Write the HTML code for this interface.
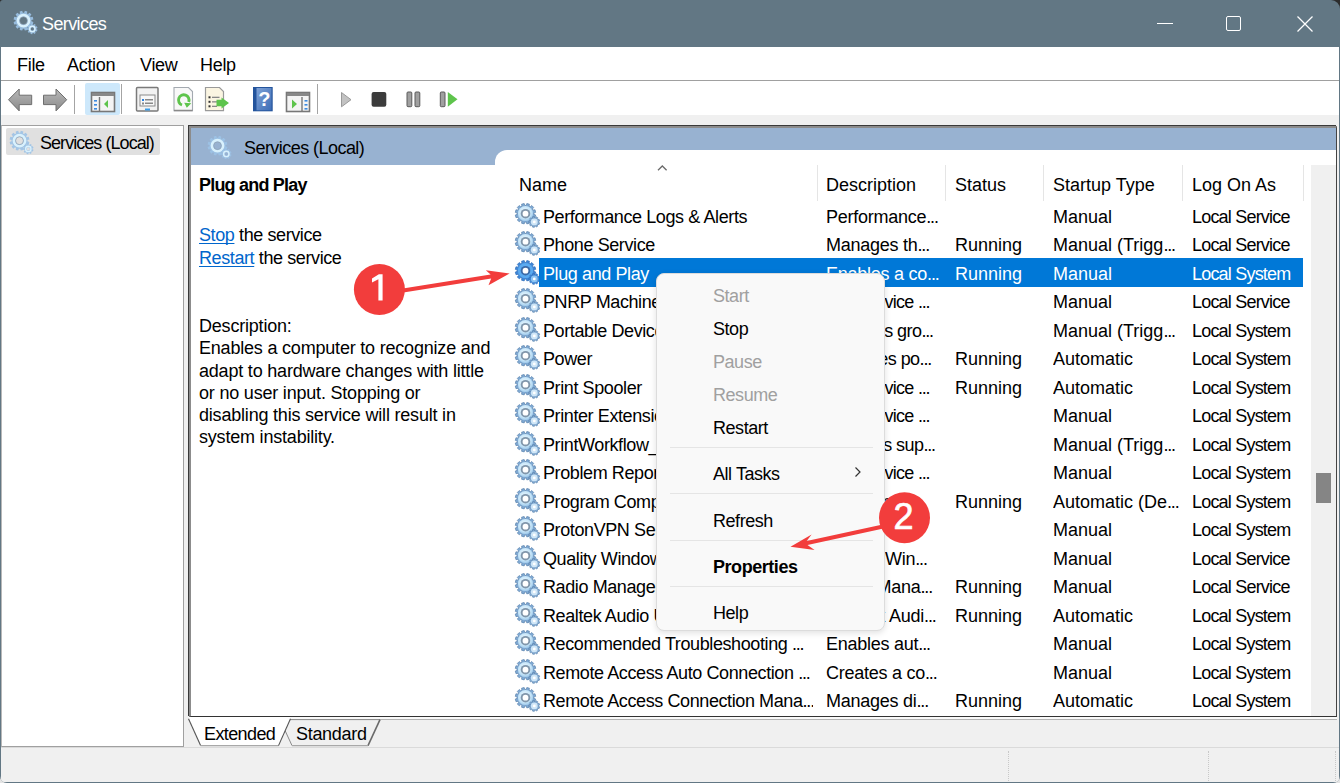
<!DOCTYPE html>
<html><head><meta charset="utf-8">
<style>
*{margin:0;padding:0;box-sizing:border-box}
html,body{width:1340px;height:783px;overflow:hidden;background:linear-gradient(#2c2c2c 50%,#e4e4e4 50%)}
body{font-family:"Liberation Sans",sans-serif;font-size:18px;color:#000;position:relative}
.a{position:absolute}
.t{position:absolute;white-space:nowrap;line-height:20px}
#win{position:absolute;left:0;top:0;width:1340px;height:783px;background:#627784;border-radius:3px 9px 7px 7px;overflow:hidden}
#title{color:#fff}
#client{position:absolute;left:1px;top:47px;width:1338px;height:735px;background:#f0f0f0}
#menubar{position:absolute;left:0;top:0;width:1338px;height:34px;background:#fff;border-bottom:1px solid #a0a0a0;letter-spacing:-0.3px}
#toolbar{position:absolute;left:0;top:34px;width:1338px;height:34px;background:#fff}
.sep{position:absolute;top:40px;width:1px;height:28px;border-left:1px dotted #9a9a9a}
#lpane{position:absolute;left:0px;top:78px;width:183px;border-left:1px solid #b8b8b8;height:622px;background:#fff;border-top:1px solid #a0a0a0;border-right:1px solid #a0a0a0;border-bottom:1px solid #a0a0a0}
#rpane{position:absolute;left:188px;top:79px;width:1148px;height:591px;background:#fff;border-top:2px solid #8c8c8c;border-left:2px solid #8c8c8c;border-bottom:1px solid #333;border-right:1px solid #444;box-shadow:-1px -1px 0 #3a3a3a}
#hdr{position:absolute;left:0;top:0;width:1145px;height:37px;background:#98b2d1}
#list{position:absolute;left:304px;top:22px;width:841px;height:566px;background:#fff;border-top-left-radius:12px}
.row{position:absolute;left:-1px;width:820px;height:28.5px}
.c{position:absolute;top:0;white-space:nowrap;line-height:28px;overflow:hidden}
.sel{background:#0078d7;color:#fff}
.cm{position:absolute;color:#000}
.dis{color:#a0a0a0}
.el{letter-spacing:-1.2px}
.lnk{color:#0066cc;text-decoration:underline;text-underline-offset:2px;text-decoration-skip-ink:none}
.msep{position:absolute;left:13px;width:203px;height:1px;background:#e5e5e5}
</style></head><body>
<svg width="0" height="0" style="position:absolute">
<defs>
<radialGradient id="gg" cx="45%" cy="40%" r="60%">
<stop offset="0" stop-color="#f2fbff"/><stop offset="0.7" stop-color="#c4e4f8"/><stop offset="1" stop-color="#9cc6e8"/>
</radialGradient>
<symbol id="gear" viewBox="0 0 27 26">
<path d="M19.77 11.35 L21.71 12.04 L21.02 14.64 L18.99 14.27 L18.34 15.40 L19.67 16.97 L17.77 18.87 L16.20 17.54 L15.07 18.19 L15.44 20.22 L12.84 20.91 L12.15 18.97 L10.85 18.97 L10.16 20.91 L7.56 20.22 L7.93 18.19 L6.80 17.54 L5.23 18.87 L3.33 16.97 L4.66 15.40 L4.01 14.27 L1.98 14.64 L1.29 12.04 L3.23 11.35 L3.23 10.05 L1.29 9.36 L1.98 6.76 L4.01 7.13 L4.66 6.00 L3.33 4.43 L5.23 2.53 L6.80 3.86 L7.93 3.21 L7.56 1.18 L10.16 0.49 L10.85 2.43 L12.15 2.43 L12.84 0.49 L15.44 1.18 L15.07 3.21 L16.20 3.86 L17.77 2.53 L19.67 4.43 L18.34 6.00 L18.99 7.13 L21.02 6.76 L21.71 9.36 L19.77 10.05Z" fill="#7fa9d3" stroke="#5a83ad" stroke-width="0.7"/>
<circle cx="11.5" cy="10.7" r="7.6" fill="url(#gg)"/>
<circle cx="11.5" cy="10.7" r="4.8" fill="#8096ab"/>
<circle cx="11.5" cy="10.7" r="2.9" fill="#fff"/>
<path d="M24.48 19.34 L25.72 19.86 L25.06 21.65 L23.78 21.25 L23.22 21.92 L23.84 23.11 L22.18 24.07 L21.46 22.94 L20.59 23.09 L20.30 24.40 L18.42 24.07 L18.59 22.74 L17.83 22.30 L16.76 23.11 L15.54 21.65 L16.53 20.74 L16.22 19.92 L14.88 19.86 L14.88 17.94 L16.22 17.88 L16.53 17.06 L15.54 16.15 L16.76 14.69 L17.83 15.50 L18.59 15.06 L18.42 13.73 L20.30 13.40 L20.59 14.71 L21.46 14.86 L22.18 13.73 L23.84 14.69 L23.22 15.88 L23.78 16.55 L25.06 16.15 L25.72 17.94 L24.48 18.46Z" fill="#7fa9d3" stroke="#5a83ad" stroke-width="0.6"/>
<circle cx="20.3" cy="18.9" r="3.4" fill="#cfe6f7"/>
<circle cx="20.3" cy="18.9" r="1.4" fill="#fff"/>
</symbol>
<symbol id="gearS" viewBox="0 0 27 26">
<path d="M19.77 11.35 L21.71 12.04 L21.02 14.64 L18.99 14.27 L18.34 15.40 L19.67 16.97 L17.77 18.87 L16.20 17.54 L15.07 18.19 L15.44 20.22 L12.84 20.91 L12.15 18.97 L10.85 18.97 L10.16 20.91 L7.56 20.22 L7.93 18.19 L6.80 17.54 L5.23 18.87 L3.33 16.97 L4.66 15.40 L4.01 14.27 L1.98 14.64 L1.29 12.04 L3.23 11.35 L3.23 10.05 L1.29 9.36 L1.98 6.76 L4.01 7.13 L4.66 6.00 L3.33 4.43 L5.23 2.53 L6.80 3.86 L7.93 3.21 L7.56 1.18 L10.16 0.49 L10.85 2.43 L12.15 2.43 L12.84 0.49 L15.44 1.18 L15.07 3.21 L16.20 3.86 L17.77 2.53 L19.67 4.43 L18.34 6.00 L18.99 7.13 L21.02 6.76 L21.71 9.36 L19.77 10.05Z" fill="#3f86d6" stroke="#2f6fba" stroke-width="0.7"/>
<circle cx="11.5" cy="10.7" r="7.6" fill="#5aaaf0"/>
<circle cx="11.5" cy="10.7" r="4.8" fill="#3a6aa8"/>
<circle cx="11.5" cy="10.7" r="2.9" fill="#fff"/>
<path d="M24.48 19.34 L25.72 19.86 L25.06 21.65 L23.78 21.25 L23.22 21.92 L23.84 23.11 L22.18 24.07 L21.46 22.94 L20.59 23.09 L20.30 24.40 L18.42 24.07 L18.59 22.74 L17.83 22.30 L16.76 23.11 L15.54 21.65 L16.53 20.74 L16.22 19.92 L14.88 19.86 L14.88 17.94 L16.22 17.88 L16.53 17.06 L15.54 16.15 L16.76 14.69 L17.83 15.50 L18.59 15.06 L18.42 13.73 L20.30 13.40 L20.59 14.71 L21.46 14.86 L22.18 13.73 L23.84 14.69 L23.22 15.88 L23.78 16.55 L25.06 16.15 L25.72 17.94 L24.48 18.46Z" fill="#3f86d6" stroke="#2f6fba" stroke-width="0.6"/>
<circle cx="20.3" cy="18.9" r="3.4" fill="#8cc4f2"/>
<circle cx="20.3" cy="18.9" r="1.4" fill="#fff"/>
</symbol>
<symbol id="gearP" viewBox="0 0 27 26">
<path d="M19.48 11.33 L21.41 12.01 L20.74 14.53 L18.72 14.14 L18.09 15.23 L19.43 16.79 L17.59 18.63 L16.03 17.29 L14.94 17.92 L15.33 19.94 L12.81 20.61 L12.13 18.68 L10.87 18.68 L10.19 20.61 L7.67 19.94 L8.06 17.92 L6.97 17.29 L5.41 18.63 L3.57 16.79 L4.91 15.23 L4.28 14.14 L2.26 14.53 L1.59 12.01 L3.52 11.33 L3.52 10.07 L1.59 9.39 L2.26 6.87 L4.28 7.26 L4.91 6.17 L3.57 4.61 L5.41 2.77 L6.97 4.11 L8.06 3.48 L7.67 1.46 L10.19 0.79 L10.87 2.72 L12.13 2.72 L12.81 0.79 L15.33 1.46 L14.94 3.48 L16.03 4.11 L17.59 2.77 L19.43 4.61 L18.09 6.17 L18.72 7.26 L20.74 6.87 L21.41 9.39 L19.48 10.07Z M7.90 10.70 A3.6 3.6 0 1 0 15.10 10.70 A3.6 3.6 0 1 0 7.90 10.70Z" fill="#9cc2e6" fill-rule="evenodd" opacity="0.9"/>
<circle cx="11.5" cy="10.7" r="5.6" fill="none" stroke="#d9f1fd" stroke-width="2.6"/>
<circle cx="11.5" cy="10.7" r="3.9" fill="none" stroke="#8a97a3" stroke-width="0.8" opacity="0.7"/>
<path d="M24.38 19.33 L25.52 19.82 L24.89 21.55 L23.70 21.19 L23.15 21.85 L23.71 22.96 L22.11 23.88 L21.43 22.84 L20.59 22.99 L20.30 24.20 L18.49 23.88 L18.63 22.65 L17.89 22.22 L16.89 22.96 L15.71 21.55 L16.61 20.70 L16.32 19.89 L15.08 19.82 L15.08 17.98 L16.32 17.91 L16.61 17.10 L15.71 16.25 L16.89 14.84 L17.89 15.58 L18.63 15.15 L18.49 13.92 L20.30 13.60 L20.59 14.81 L21.43 14.96 L22.11 13.92 L23.71 14.84 L23.15 15.95 L23.70 16.61 L24.89 16.25 L25.52 17.98 L24.38 18.47Z M18.70 18.90 A1.6 1.6 0 1 0 21.90 18.90 A1.6 1.6 0 1 0 18.70 18.90Z" fill="#9cc2e6" fill-rule="evenodd" opacity="0.9"/>
<circle cx="20.3" cy="18.9" r="2.7" fill="none" stroke="#d9f1fd" stroke-width="1.4"/>
</symbol>
</defs>
</svg>

<div id="win">
  <!-- title bar -->
  <svg class="a" style="left:12px;top:10px" width="27" height="26"><use href="#gearP"/></svg>
  <div class="t" id="title" style="left:42px;top:14px;letter-spacing:-0.6px">Services</div>
  <div class="a" style="left:1157px;top:23px;width:16px;height:1px;background:#fff"></div>
  <div class="a" style="left:1226px;top:16px;width:15px;height:15px;border:1.5px solid #fff;border-radius:2px"></div>
  <svg class="a" style="left:1296px;top:15px" width="18" height="18"><path d="M1.5 1.5L16.5 16.5M16.5 1.5L1.5 16.5" stroke="#fff" stroke-width="1.3"/></svg>

<svg class="a" style="left:0;top:81px;z-index:5" width="470" height="35">
<defs>
<linearGradient id="ag" x1="0" y1="0" x2="0" y2="1"><stop offset="0" stop-color="#b8b8b8"/><stop offset="1" stop-color="#8a8a8a"/></linearGradient>
</defs>
<!-- back -->
<path d="M8.5 18.7 L19.2 8 L19.2 14.2 L31.7 14.2 L31.7 23.6 L19.2 23.6 L19.2 29.9 Z" fill="url(#ag)" stroke="#6e6e6e" stroke-width="1"/>
<!-- forward -->
<path d="M66.7 18.7 L56 8 L56 14.2 L43.5 14.2 L43.5 23.6 L56 23.6 L56 29.9 Z" fill="url(#ag)" stroke="#6e6e6e" stroke-width="1"/>
<line x1="74.5" y1="4" x2="74.5" y2="33" stroke="#a4a4a4"/>
<!-- selected show tree -->
<rect x="85" y="2" width="35" height="32" rx="2" fill="#cde8fb"/>
<rect x="91.5" y="11.5" width="23" height="19" fill="#f4f4f4" stroke="#777" stroke-width="1.6"/>
<rect x="92" y="12" width="22" height="3" fill="#888"/>
<line x1="99.5" y1="16" x2="99.5" y2="30" stroke="#777" stroke-width="1.4"/>
<rect x="94" y="19" width="3" height="1.6" fill="#3c8ae0"/><rect x="94" y="23" width="3" height="1.6" fill="#3c8ae0"/><rect x="94" y="27" width="3" height="1.6" fill="#3c8ae0"/>
<path d="M104 23 L108 19 L108 27 Z" fill="#5ec44c"/>
<line x1="121.5" y1="3" x2="121.5" y2="33" stroke="#a4a4a4"/>
<!-- properties -->
<rect x="136.5" y="6.5" width="21.5" height="23.5" rx="1" fill="#f2f2f2" stroke="#7a7a7a" stroke-width="1.5"/>
<rect x="140" y="14" width="15" height="11" fill="#f8f8f8" stroke="#8a8a8a" stroke-width="1"/>
<rect x="142" y="18" width="2" height="2" fill="#2a80e0"/><rect x="145" y="18" width="8" height="1.5" fill="#888"/>
<rect x="142" y="21.5" width="2" height="2" fill="#888"/><rect x="145" y="21.5" width="8" height="1.5" fill="#888"/>
<rect x="145" y="27.5" width="5" height="2" fill="#3d9de8"/>
<!-- refresh doc -->
<path d="M174 6.5 H188.5 L192.5 10.5 V29.7 H174 Z" fill="#f8f8f8" stroke="#a3a9b0" stroke-width="1.1"/>
<path d="M174 29.5 H192.5" stroke="#8a8a8a" stroke-width="1.4"/>
<path d="M182 24 A5.25 5.25 0 1 1 188.7 20.9" fill="none" stroke="#5ec44c" stroke-width="2.9"/>
<path d="M184.2 21.8 L191.3 22.3 L186.8 26.8 Z" fill="#5ec44c"/>
<!-- export doc -->
<path d="M205.5 6.5 H219.5 L223.5 10.5 V29.7 H205.5 Z" fill="#fbf5e2" stroke="#9a9a9a" stroke-width="1.2"/>
<rect x="208.5" y="15.3" width="2" height="2" fill="#333"/><rect x="212" y="15.7" width="7.5" height="1.3" fill="#888"/>
<rect x="208.5" y="19.8" width="2" height="2" fill="#333"/><rect x="212" y="20.2" width="7.5" height="1.3" fill="#888"/>
<rect x="208.5" y="24.3" width="2" height="2" fill="#333"/><rect x="212" y="24.7" width="5" height="1.3" fill="#888"/>
<path d="M216.5 18.8 H221.5 V16.5 L229 22 L221.5 27.5 V25.2 H216.5 Z" fill="#5ec44c"/>
<!-- help book -->
<linearGradient id="bk" x1="0" y1="0" x2="1" y2="1"><stop offset="0" stop-color="#7fa2d6"/><stop offset="1" stop-color="#3d6db6"/></linearGradient>
<rect x="253" y="6" width="19.7" height="24.3" fill="#24549c"/>
<rect x="256.5" y="7" width="15" height="22.3" fill="url(#bk)"/>
<text x="264.3" y="25" font-family="Liberation Sans" font-weight="bold" font-size="20" fill="#fff" text-anchor="middle">?</text>
<!-- action pane -->
<rect x="286.5" y="11.5" width="23" height="19" fill="#f4f4f4" stroke="#777" stroke-width="1.6"/>
<rect x="287" y="12" width="22" height="3" fill="#888"/>
<line x1="302" y1="16" x2="302" y2="30" stroke="#777" stroke-width="1.4"/>
<rect x="304.5" y="19" width="3" height="1.6" fill="#3c8ae0"/><rect x="304.5" y="23" width="3" height="1.6" fill="#3c8ae0"/><rect x="304.5" y="27" width="3" height="1.6" fill="#3c8ae0"/>
<path d="M292 18.5 L297 23 L292 27.5 Z" fill="#5ec44c"/>
<line x1="317.5" y1="3" x2="317.5" y2="33" stroke="#a4a4a4"/>
<!-- play -->
<path d="M341.5 11.5 L351 18.7 L341.5 25.8 Z" fill="#c2c2c2" stroke="#9a9a9a" stroke-width="1"/>
<!-- stop -->
<rect x="371.6" y="11" width="14.7" height="14.7" rx="2" fill="#3c3c3c"/>
<!-- pause -->
<rect x="407" y="11" width="4.8" height="14.7" rx="1" fill="#a0a0a0" stroke="#5a5a5a" stroke-width="1"/>
<rect x="415" y="11" width="4.8" height="14.7" rx="1" fill="#a0a0a0" stroke="#5a5a5a" stroke-width="1"/>
<!-- restart -->
<rect x="440.3" y="11" width="4.7" height="14.7" rx="1" fill="#a0a0a0" stroke="#5a5a5a" stroke-width="1"/>
<path d="M447.8 11 L457.5 18.3 L447.8 25.7 Z" fill="#5ec44c"/>
</svg>
  <div id="client">
    <div id="menubar">
      <div class="t" style="left:16px;top:8px">File</div>
      <div class="t" style="left:66px;top:8px">Action</div>
      <div class="t" style="left:139px;top:8px">View</div>
      <div class="t" style="left:199px;top:8px">Help</div>
    </div>
    <div id="toolbar"></div>
    <div class="a" style="left:0;top:68px;width:1338px;height:9px;background:#f0f0f0"></div>
    <div id="lpane">
      <div class="a" style="left:4px;top:2px;width:154px;height:27px;background:#e0e0e0;border-radius:2px"></div>
      <svg class="a" style="left:6px;top:4px" width="27" height="26"><use href="#gearP"/></svg>
      <div class="t" style="left:38px;top:7px;letter-spacing:-0.95px">Services (Local)</div>
    </div>
    <div id="rpane">
      <div id="hdr">
        <svg class="a" style="left:15px;top:7px" width="27" height="26"><use href="#gearP"/></svg>
        <div class="t" style="left:53px;top:10px;letter-spacing:-0.55px">Services (Local)</div>
      </div>
      <div class="t" style="left:8px;top:47px;font-weight:bold;letter-spacing:-0.8px">Plug and Play</div>
      <div class="t" style="left:8px;top:96.5px;letter-spacing:-0.4px"><span class="lnk">Stop</span> the service</div>
      <div class="t" style="left:8px;top:119.5px;letter-spacing:-0.4px"><span class="lnk">Restart</span> the service</div>
      <div class="t" style="left:8px;top:187px;line-height:22.25px;letter-spacing:-0.2px">Description:<br>Enables a computer to recognize and<br>adapt to hardware changes with little<br>or no user input. Stopping or<br>disabling this service will result in<br>system instability.</div>
      <div id="list">
<div class="t" style="left:24px;top:25px">Name</div>
<div class="a" style="left:162px;top:15px;width:11px;height:6px"><svg width="11" height="6" style="display:block"><path d="M1 5.2L5.3 1L9.6 5.2" fill="none" stroke="#6a6a6a" stroke-width="1.3"/></svg></div>
<div class="t" style="left:331px;top:25px">Description</div>
<div class="t" style="left:460px;top:25px">Status</div>
<div class="t" style="left:558px;top:25px">Startup Type</div>
<div class="t" style="left:697px;top:25px">Log On As</div>
<div class="a" style="left:322px;top:15px;width:1px;height:36px;background:#e5e5e5"></div>
<div class="a" style="left:450px;top:15px;width:1px;height:36px;background:#e5e5e5"></div>
<div class="a" style="left:548px;top:15px;width:1px;height:36px;background:#e5e5e5"></div>
<div class="a" style="left:687px;top:15px;width:1px;height:36px;background:#e5e5e5"></div>
<div class="a" style="left:808px;top:15px;width:1px;height:36px;background:#e5e5e5"></div>
<div class="row" style="top:52.50px">
<svg class="a" style="left:20px;top:0" width="27" height="26"><use href="#gear"/></svg>
<div class="c" style="left:49px;width:270px;letter-spacing:-0.4px;">Performance Logs & Alerts</div>
<div class="c" style="left:332px;width:125px;letter-spacing:-0.25px;">Performance<span class="el">...</span></div>
<div class="c" style="left:461px;width:95px;"></div>
<div class="c" style="left:559px;width:135px;">Manual</div>
<div class="c" style="left:698px;width:110px;letter-spacing:-0.8px;">Local Service</div>
</div>
<div class="row" style="top:81.00px">
<svg class="a" style="left:20px;top:0" width="27" height="26"><use href="#gear"/></svg>
<div class="c" style="left:49px;width:270px;letter-spacing:-0.4px;">Phone Service</div>
<div class="c" style="left:332px;width:125px;letter-spacing:-0.25px;">Manages th<span class="el">...</span></div>
<div class="c" style="left:461px;width:95px;">Running</div>
<div class="c" style="left:559px;width:135px;">Manual (Trigg<span class="el">...</span></div>
<div class="c" style="left:698px;width:110px;letter-spacing:-0.8px;">Local Service</div>
</div>
<div class="row" style="top:109.50px">
<svg class="a" style="left:20px;top:0" width="27" height="26"><use href="#gearS"/></svg>
<div class="a sel" style="left:45px;top:-1.3px;width:764px;height:28.3px"></div>
<div class="c" style="left:49px;width:270px;letter-spacing:-0.4px;color:#fff;">Plug and Play</div>
<div class="c" style="left:332px;width:125px;letter-spacing:-0.25px;color:#fff;">Enables a co<span class="el">...</span></div>
<div class="c" style="left:461px;width:95px;color:#fff;">Running</div>
<div class="c" style="left:559px;width:135px;color:#fff;">Manual</div>
<div class="c" style="left:698px;width:110px;letter-spacing:-0.8px;color:#fff;">Local System</div>
</div>
<div class="row" style="top:138.00px">
<svg class="a" style="left:20px;top:0" width="27" height="26"><use href="#gear"/></svg>
<div class="c" style="left:49px;width:270px;letter-spacing:-0.4px;">PNRP Machine Name Publication Service</div>
<div class="c" style="left:332px;width:125px;letter-spacing:-0.7px;">This service <span class="el">...</span></div>
<div class="c" style="left:461px;width:95px;"></div>
<div class="c" style="left:559px;width:135px;">Manual</div>
<div class="c" style="left:698px;width:110px;letter-spacing:-0.8px;">Local Service</div>
</div>
<div class="row" style="top:166.50px">
<svg class="a" style="left:20px;top:0" width="27" height="26"><use href="#gear"/></svg>
<div class="c" style="left:49px;width:270px;letter-spacing:-0.4px;">Portable Device Enumerator Service</div>
<div class="c" style="left:332px;width:125px;letter-spacing:-0.55px;">Enforces gro<span class="el">...</span></div>
<div class="c" style="left:461px;width:95px;"></div>
<div class="c" style="left:559px;width:135px;">Manual (Trigg<span class="el">...</span></div>
<div class="c" style="left:698px;width:110px;letter-spacing:-0.8px;">Local System</div>
</div>
<div class="row" style="top:195.00px">
<svg class="a" style="left:20px;top:0" width="27" height="26"><use href="#gear"/></svg>
<div class="c" style="left:49px;width:270px;letter-spacing:-0.4px;">Power</div>
<div class="c" style="left:332px;width:125px;letter-spacing:-0.55px;">Manages po<span class="el">...</span></div>
<div class="c" style="left:461px;width:95px;">Running</div>
<div class="c" style="left:559px;width:135px;">Automatic</div>
<div class="c" style="left:698px;width:110px;letter-spacing:-0.8px;">Local System</div>
</div>
<div class="row" style="top:223.50px">
<svg class="a" style="left:20px;top:0" width="27" height="26"><use href="#gear"/></svg>
<div class="c" style="left:49px;width:270px;letter-spacing:-0.4px;">Print Spooler</div>
<div class="c" style="left:332px;width:125px;letter-spacing:-0.7px;">This service <span class="el">...</span></div>
<div class="c" style="left:461px;width:95px;">Running</div>
<div class="c" style="left:559px;width:135px;">Automatic</div>
<div class="c" style="left:698px;width:110px;letter-spacing:-0.8px;">Local System</div>
</div>
<div class="row" style="top:252.00px">
<svg class="a" style="left:20px;top:0" width="27" height="26"><use href="#gear"/></svg>
<div class="c" style="left:49px;width:270px;letter-spacing:-0.4px;">Printer Extensions and Notifications</div>
<div class="c" style="left:332px;width:125px;letter-spacing:-0.7px;">This service <span class="el">...</span></div>
<div class="c" style="left:461px;width:95px;"></div>
<div class="c" style="left:559px;width:135px;">Manual</div>
<div class="c" style="left:698px;width:110px;letter-spacing:-0.8px;">Local System</div>
</div>
<div class="row" style="top:280.50px">
<svg class="a" style="left:20px;top:0" width="27" height="26"><use href="#gear"/></svg>
<div class="c" style="left:49px;width:270px;letter-spacing:-0.4px;">PrintWorkflow_3a1b2</div>
<div class="c" style="left:332px;width:125px;letter-spacing:-0.55px;">Provides sup<span class="el">...</span></div>
<div class="c" style="left:461px;width:95px;"></div>
<div class="c" style="left:559px;width:135px;">Manual (Trigg<span class="el">...</span></div>
<div class="c" style="left:698px;width:110px;letter-spacing:-0.8px;">Local System</div>
</div>
<div class="row" style="top:309.00px">
<svg class="a" style="left:20px;top:0" width="27" height="26"><use href="#gear"/></svg>
<div class="c" style="left:49px;width:270px;letter-spacing:-0.4px;">Problem Reports Control Panel Support</div>
<div class="c" style="left:332px;width:125px;letter-spacing:-0.7px;">This service <span class="el">...</span></div>
<div class="c" style="left:461px;width:95px;"></div>
<div class="c" style="left:559px;width:135px;">Manual</div>
<div class="c" style="left:698px;width:110px;letter-spacing:-0.8px;">Local System</div>
</div>
<div class="row" style="top:337.50px">
<svg class="a" style="left:20px;top:0" width="27" height="26"><use href="#gear"/></svg>
<div class="c" style="left:49px;width:270px;letter-spacing:-0.4px;">Program Compatibility Assistant Service</div>
<div class="c" style="left:332px;width:125px;letter-spacing:-0.25px;">This service</div>
<div class="c" style="left:461px;width:95px;">Running</div>
<div class="c" style="left:559px;width:135px;">Automatic (De<span class="el">...</span></div>
<div class="c" style="left:698px;width:110px;letter-spacing:-0.8px;">Local System</div>
</div>
<div class="row" style="top:366.00px">
<svg class="a" style="left:20px;top:0" width="27" height="26"><use href="#gear"/></svg>
<div class="c" style="left:49px;width:270px;letter-spacing:-0.4px;">ProtonVPN Service</div>
<div class="c" style="left:332px;width:125px;letter-spacing:-0.25px;"></div>
<div class="c" style="left:461px;width:95px;"></div>
<div class="c" style="left:559px;width:135px;">Manual</div>
<div class="c" style="left:698px;width:110px;letter-spacing:-0.8px;">Local System</div>
</div>
<div class="row" style="top:394.50px">
<svg class="a" style="left:20px;top:0" width="27" height="26"><use href="#gear"/></svg>
<div class="c" style="left:49px;width:270px;letter-spacing:-0.4px;">Quality Windows Audio Video Experience</div>
<div class="c" style="left:332px;width:125px;letter-spacing:-0.25px;">Quality Win<span class="el">...</span></div>
<div class="c" style="left:461px;width:95px;"></div>
<div class="c" style="left:559px;width:135px;">Manual</div>
<div class="c" style="left:698px;width:110px;letter-spacing:-0.8px;">Local Service</div>
</div>
<div class="row" style="top:423.00px">
<svg class="a" style="left:20px;top:0" width="27" height="26"><use href="#gear"/></svg>
<div class="c" style="left:49px;width:270px;letter-spacing:-0.4px;">Radio Management Service</div>
<div class="c" style="left:332px;width:125px;letter-spacing:-0.25px;">Radio Mana<span class="el">...</span></div>
<div class="c" style="left:461px;width:95px;">Running</div>
<div class="c" style="left:559px;width:135px;">Manual</div>
<div class="c" style="left:698px;width:110px;letter-spacing:-0.8px;">Local Service</div>
</div>
<div class="row" style="top:451.50px">
<svg class="a" style="left:20px;top:0" width="27" height="26"><use href="#gear"/></svg>
<div class="c" style="left:49px;width:270px;letter-spacing:-0.4px;">Realtek Audio Universal Service</div>
<div class="c" style="left:332px;width:125px;letter-spacing:-0.25px;">Realtek Audi<span class="el">...</span></div>
<div class="c" style="left:461px;width:95px;">Running</div>
<div class="c" style="left:559px;width:135px;">Automatic</div>
<div class="c" style="left:698px;width:110px;letter-spacing:-0.8px;">Local System</div>
</div>
<div class="row" style="top:480.00px">
<svg class="a" style="left:20px;top:0" width="27" height="26"><use href="#gear"/></svg>
<div class="c" style="left:49px;width:270px;letter-spacing:-0.4px;">Recommended Troubleshooting <span class="el">...</span></div>
<div class="c" style="left:332px;width:125px;letter-spacing:-0.25px;">Enables aut<span class="el">...</span></div>
<div class="c" style="left:461px;width:95px;"></div>
<div class="c" style="left:559px;width:135px;">Manual</div>
<div class="c" style="left:698px;width:110px;letter-spacing:-0.8px;">Local System</div>
</div>
<div class="row" style="top:508.50px">
<svg class="a" style="left:20px;top:0" width="27" height="26"><use href="#gear"/></svg>
<div class="c" style="left:49px;width:270px;letter-spacing:-0.4px;">Remote Access Auto Connection <span class="el">...</span></div>
<div class="c" style="left:332px;width:125px;letter-spacing:-0.25px;">Creates a co<span class="el">...</span></div>
<div class="c" style="left:461px;width:95px;"></div>
<div class="c" style="left:559px;width:135px;">Manual</div>
<div class="c" style="left:698px;width:110px;letter-spacing:-0.8px;">Local System</div>
</div>
<div class="row" style="top:537.00px">
<svg class="a" style="left:20px;top:0" width="27" height="26"><use href="#gear"/></svg>
<div class="c" style="left:49px;width:270px;letter-spacing:-0.4px;">Remote Access Connection Mana<span class="el">...</span></div>
<div class="c" style="left:332px;width:125px;letter-spacing:-0.25px;">Manages di<span class="el">...</span></div>
<div class="c" style="left:461px;width:95px;">Running</div>
<div class="c" style="left:559px;width:135px;">Automatic</div>
<div class="c" style="left:698px;width:110px;letter-spacing:-0.8px;">Local System</div>
</div>
<div class="a" style="left:816px;top:15px;width:25px;height:551px;background:#f0f0f0"></div>
<div class="a" style="left:821px;top:323px;width:15px;height:30px;background:#858585"></div>
</div>
    </div>
  </div>
</div>

<!-- tabs -->
<div class="a" style="left:189px;top:717px;width:1148px;height:2px;background:#fafafa"></div>
<div class="a" style="left:290px;top:719px;width:1047px;height:1px;background:#b4b4b4"></div>
<svg class="a" style="left:186px;top:714px" width="200" height="35">
<path d="M94 5.6 L106 31.6 L182 31.6 L194 5.6 Z" fill="#f0f0f0"/>
<path d="M94 5.6 H194" stroke="#8a8a8a" stroke-width="1"/>
<path d="M182 31.6 L194 5.6" stroke="#6a6a6a" stroke-width="1.6"/>
<path d="M94 5.6 L106 31.6" stroke="#8a8a8a" stroke-width="1"/>
<path d="M106 31.6 H182" stroke="#a8a8a8" stroke-width="1.2"/>
<path d="M2.5 3 L2.5 4.7 L14.6 31.6 L92.5 31.6 L104.5 4.7 L104.5 3 Z" fill="#fff"/>
<path d="M2.5 4.7 L14.6 31.6" stroke="#555" stroke-width="1.1"/>
<path d="M14.6 31.6 H92.5" stroke="#a8a8a8" stroke-width="1.2"/>
<path d="M92.5 31.6 L104.5 4.7" stroke="#555" stroke-width="1.1"/>
</svg>
<div class="t" style="left:204px;top:724px;letter-spacing:-0.6px">Extended</div>
<div class="t" style="left:296px;top:724px;letter-spacing:-0.3px">Standard</div>
<!-- status bar -->
<div class="a" style="left:1px;top:747px;width:1338px;height:1px;background:#dadada"></div>
<div class="a" style="left:1008px;top:751px;width:1px;height:30px;border-left:1px dotted #c8c8c8"></div>
<div class="a" style="left:1208px;top:751px;width:1px;height:30px;border-left:1px dotted #c8c8c8"></div>
<div class="a" style="left:1335px;top:751px;width:1px;height:30px;border-left:1px dotted #c8c8c8"></div>

<!-- context menu -->
<div class="a" style="left:656px;top:273px;width:229px;height:358px;letter-spacing:-0.45px;background:#f9f9f9;border:1px solid #dcdcdc;border-radius:8px;box-shadow:0 2px 6px rgba(0,0,0,0.12)">
  <div class="t dis" style="left:56px;top:12px">Start</div>
  <div class="t" style="left:56px;top:45px">Stop</div>
  <div class="t dis" style="left:56px;top:78px">Pause</div>
  <div class="t dis" style="left:56px;top:111px">Resume</div>
  <div class="t" style="left:56px;top:144px">Restart</div>
  <div class="msep" style="top:173px"></div>
  <div class="t" style="left:56px;top:190px">All Tasks</div>
  <svg class="a" style="left:197px;top:192px" width="8" height="12"><path d="M1.5 1.5L6 6L1.5 10.5" fill="none" stroke="#333" stroke-width="1.2"/></svg>
  <div class="msep" style="top:219px"></div>
  <div class="t" style="left:56px;top:237px">Refresh</div>
  <div class="msep" style="top:266px"></div>
  <div class="t" style="left:56px;top:283px;font-weight:bold">Properties</div>
  <div class="msep" style="top:312px"></div>
  <div class="t" style="left:56px;top:329px">Help</div>
</div>

<!-- annotations -->
<svg class="a" style="left:0;top:0" width="1340" height="783">
<g fill="#f23d3c">
<path d="M399.7 289 L490.6 274.5 L485.8 270.2 L509.6 273.5 L488.5 285.2 L491.2 278.5 L400.3 293 Z"/>
<circle cx="379.4" cy="289.5" r="25.5"/>
<path d="M889.6 523 L806.7 541.1 L811.6 534.6 L790.5 546.7 L814.6 550.1 L807.5 545.1 L890.4 527 Z"/>
<circle cx="904.5" cy="517.8" r="25.5"/>
</g>
<path d="M382.6 274.2 L382.6 300.6 L378.4 300.6 L378.4 279.2 L372 282.6 L372 278.6 L378.9 274.2 Z" fill="#fff"/>
<text x="903.5" y="528.6" font-family="Liberation Sans" font-size="36" fill="#fff" stroke="#fff" stroke-width="0.7" text-anchor="middle">2</text>
</svg>

</body></html>
